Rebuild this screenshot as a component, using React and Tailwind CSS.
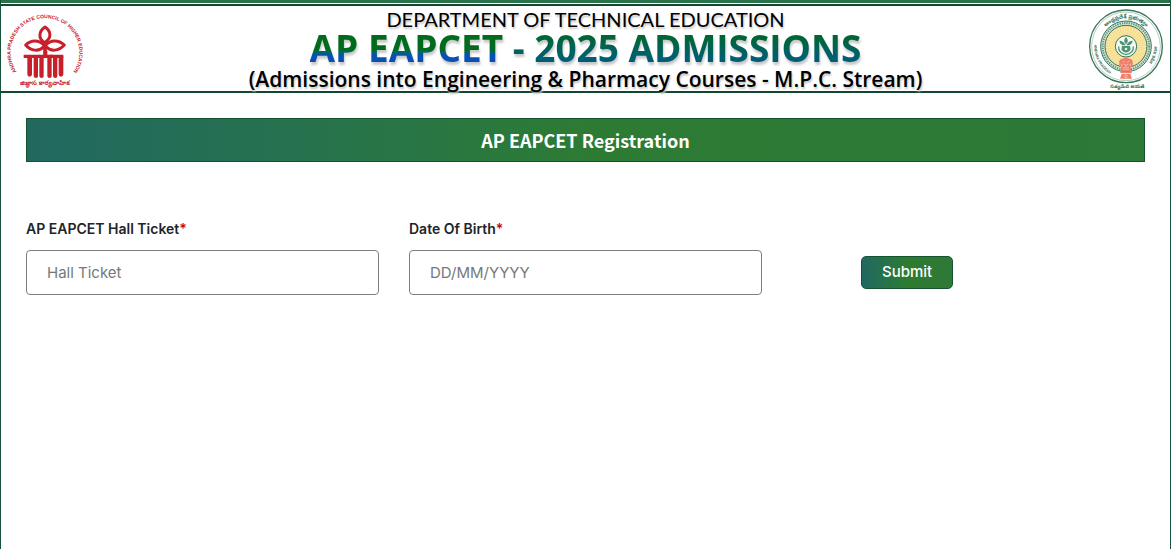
import React from "react";

const CouncilLogo = () => (
  <svg
    viewBox="0 0 240 240"
    className="h-20 w-20 shrink-0"
    role="img"
    aria-label="Andhra Pradesh State Council of Higher Education"
  >
    <defs>
      <path id="councilRing" d="M 45 201 A 103 103 0 1 1 195 201" />
    </defs>
    <g fill="#c8202b">
      <text
        fontFamily="'Liberation Sans', Arial, sans-serif"
        fontSize="15"
        fontWeight="700"
      >
        <textPath href="#councilRing" startOffset="50%" textAnchor="middle">
          ANDHRA PRADESH STATE COUNCIL OF HIGHER EDUCATION
        </textPath>
      </text>
      {/* hands */}
      <path d="M56 137h48v10H56zM134 137h41v10h-41z" />
      <path d="M67 142h14v54q0 7-7 7t-7-7zM86 142h13v60q0 5-6 5t-7-5zM103 142h13v60q0 5-6 5t-7-5zM127 142h13v60q0 5-6 5t-7-5zM144 142h13v60q0 5-6 5t-7-5zM161 142h14v54q0 7-7 7t-7-7z" />
      <path d="M102 137h15v-12h10v12h16v10h-41z" />
    </g>
    {/* flower */}
    <g fill="none" stroke="#c8202b" strokeWidth="9" strokeLinejoin="round">
      <path d="M120 54C100 68 100 88 118 101C140 88 140 68 120 54Z" />
      <path d="M118 109C101 91 77 93 62 108C77 126 103 130 118 111Z" />
      <path d="M122 109C137 91 161 93 178 108C161 126 137 130 122 111Z" />
      <path d="M120 98V142" strokeWidth="11" />
    </g>
    <text
      x="120"
      y="229"
      textAnchor="middle"
      fill="#c8202b"
      fontFamily="'Noto Sans Telugu', 'Noto Sans', sans-serif"
      fontSize="19"
      fontWeight="700"
    >
      జిజ్ఞాస కార్యవాహిక
    </text>
  </svg>
);

const StateEmblem = () => (
  <svg
    viewBox="0 0 240 246"
    className="h-[82px] w-20 shrink-0"
    role="img"
    aria-label="Government of Andhra Pradesh"
  >
    <defs>
      <path id="emblemTop" d="M 36 115 A 84 84 0 0 1 204 115" />
      <path id="emblemLeft" d="M 27 95 A 95 95 0 0 0 86 204" />
      <path id="emblemRight" d="M 202 95 A 84 84 0 0 1 168 184" />
    </defs>
    <circle cx="120" cy="115" r="109" fill="#fff" stroke="#39765a" strokeWidth="4" />
    <circle cx="120" cy="115" r="103" fill="none" stroke="#8fb59f" strokeWidth="2" />
    <circle cx="120" cy="115" r="76" fill="#d6e6d8" stroke="#39765a" strokeWidth="3" />
    <circle
      cx="120"
      cy="115"
      r="70"
      fill="none"
      stroke="#5d947b"
      strokeWidth="6"
      strokeDasharray="4 3"
    />
    <circle cx="120" cy="115" r="63" fill="#f6dc8c" stroke="#39765a" strokeWidth="3" />
    <circle
      cx="120"
      cy="115"
      r="46"
      fill="none"
      stroke="#fbedba"
      strokeWidth="28"
      strokeDasharray="2 5"
    />
    <circle cx="120" cy="115" r="32" fill="#f4faf2" stroke="#2f7557" strokeWidth="3" />
    {/* kalasam */}
    <g fill="#4e9275">
      <path d="M108 114h24q6 17-12 20q-18-3-12-20z" />
      <path d="M119 112q-17 1-19-14q13 0 19 14zM121 112q17 1 19-14q-13 0-19 14zM120 109q-11-10 0-22q11 12 0 22z" />
      <path d="M98 115q-2 20 22 25q24-5 22-25" fill="none" stroke="#4e9275" strokeWidth="4" />
    </g>
    <circle cx="120" cy="123" r="4" fill="#e6f1e6" />
    <g
      fill="#2f6d51"
      fontFamily="'Noto Sans Telugu', 'Noto Sans', sans-serif"
      fontWeight="700"
    >
      <text fontSize="16">
        <textPath href="#emblemTop" startOffset="50%" textAnchor="middle">
          ఆంధ్రప్రదేశ్ ప్రభుత్వం
        </textPath>
      </text>
      <text x="124" y="240" textAnchor="middle" fontSize="14">
        సత్యమేవ జయతే
      </text>
    </g>
    <g
      fill="#2f6d51"
      fontFamily="'Liberation Sans', Arial, sans-serif"
      fontWeight="700"
    >
      <text fontSize="11">
        <textPath href="#emblemLeft" startOffset="50%" textAnchor="middle">
          ANDHRA PRADESH
        </textPath>
      </text>
      <text fontSize="13" fontFamily="'Noto Sans Devanagari', 'Noto Sans', sans-serif">
        <textPath href="#emblemRight" startOffset="45%" textAnchor="middle">
          आंध्र प्रदेश
        </textPath>
      </text>
    </g>
    {/* lion capital */}
    <g fill="#ee7f6d">
      <path d="M108 153q12-10 24 0q10 2 8 12q2 10-6 13l2 11h-32l2-11q-8-3-6-13q-2-10 8-12z" />
      <path d="M103 190h34v6h-34zM107 198h26l5 14h-36z" />
    </g>
    <g fill="none" stroke="#fbd5cb" strokeWidth="2">
      <path d="M111 159l5 4M129 159l-5 4M113 169q7 5 14 0M114 177v10M126 177v10M120 173v14M107 167v8M133 167v8" />
      <circle cx="120" cy="205" r="4" />
    </g>
  </svg>
);

const Field = ({ id, label, placeholder }) => (
  <div>
    <label
      htmlFor={id}
      className="block text-sm leading-[22px] font-semibold text-[#212529]"
    >
      {label}
      <span className="text-[#d0021b]">*</span>
    </label>
    <input
      id={id}
      type="text"
      placeholder={placeholder}
      className="mt-2.5 block h-[45px] w-full rounded border border-[#7c7e82] bg-white px-5 text-[15px] text-[#212529] placeholder:text-[#75797d]"
    />
  </div>
);

export default function App() {
  return (
    <div className="min-h-screen border-x border-[#16543a] bg-white font-['Inter',sans-serif]">
      <div className="h-[3px] bg-[#2a7048]" />

      {/* Header */}
      <header className="mt-px flex items-center justify-between border-y-2 border-[#14472f] px-1">
        <CouncilLogo />
        <div className="pt-[3px] text-center text-black">
          <p className="font-['Lato',sans-serif] text-[20px] leading-5 [text-shadow:1px_2px_2px_#c4c4c4]">
            DEPARTMENT OF TECHNICAL EDUCATION
          </p>
          <h1 className="font-['Open_Sans',sans-serif] text-[37px] leading-[38px] font-bold drop-shadow-[1px_3px_1px_#c8c8c8]">
            <span className="bg-linear-to-b from-[#006b1c] from-55% to-[#0a50b4] to-65% bg-clip-text text-transparent">
              AP EAPCET
            </span>{" "}
            <span className="bg-linear-to-b from-[#00661c] from-20% to-[#005a84] to-85% bg-clip-text text-transparent">
              - 2025 ADMISSIONS
            </span>
          </h1>
          <p className="font-['Open_Sans',sans-serif] text-[21px] leading-6 font-semibold [text-shadow:1px_2px_2px_#c4c4c4]">
            (Admissions into Engineering &amp; Pharmacy Courses - M.P.C. Stream)
          </p>
        </div>
        <StateEmblem />
      </header>

      {/* Registration */}
      <main className="px-[25px] pt-[25px]">
        <h2 className="border border-[#14532d] bg-linear-to-r from-[#226860] via-[#2d7b33] to-[#2c7938] text-center font-['Noto_Sans_CJK_SC',sans-serif] text-[18px] leading-[42px] font-bold text-white">
          AP EAPCET Registration
        </h2>
        <form
          className="mt-14 grid grid-cols-3 items-end gap-x-[30px]"
          onSubmit={(e) => e.preventDefault()}
        >
          <Field
            id="hallTicket"
            label="AP EAPCET Hall Ticket"
            placeholder="Hall Ticket"
          />
          <Field id="dob" label="Date Of Birth" placeholder="DD/MM/YYYY" />
          <div className="pb-1.5 pl-[69px]">
            <button
              type="submit"
              className="h-[33px] rounded-[5px] border border-[#14532d] bg-linear-to-r from-[#226860] via-[#2d7b2f] to-[#2f7838] px-5 text-[15px] font-medium text-white"
            >
              Submit
            </button>
          </div>
        </form>
      </main>
    </div>
  );
}
